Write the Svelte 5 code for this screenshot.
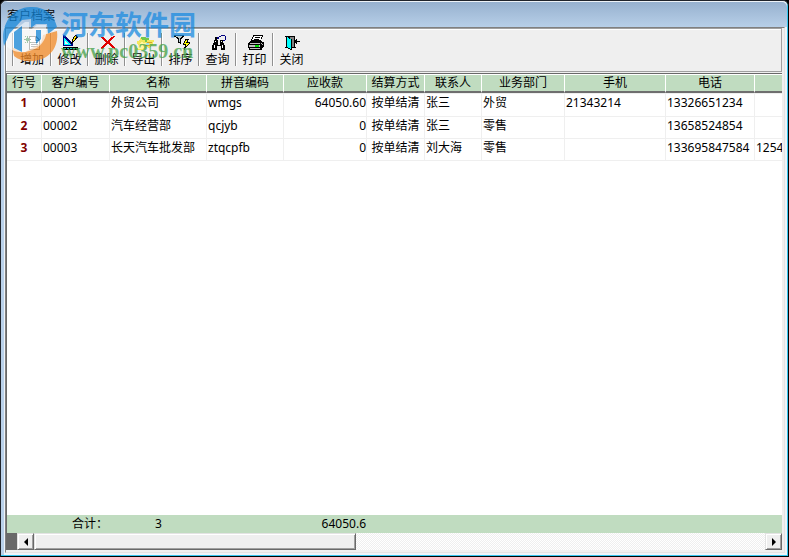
<script>
  const tools = [
    { id: 'add', label: '增加' },
    { id: 'edit', label: '修改' },
    { id: 'remove', label: '删除' },
    { id: 'export', label: '导出' },
    { id: 'sort', label: '排序' },
    { id: 'search', label: '查询' },
    { id: 'print', label: '打印' },
    { id: 'close', label: '关闭' }
  ]

  const columns = [
    { key: 'no', title: '行号', width: 35 },
    { key: 'code', title: '客户编号', width: 68 },
    { key: 'name', title: '名称', width: 97 },
    { key: 'pinyin', title: '拼音编码', width: 77 },
    { key: 'due', title: '应收款', width: 83 },
    { key: 'settle', title: '结算方式', width: 58 },
    { key: 'contact', title: '联系人', width: 57 },
    { key: 'dept', title: '业务部门', width: 83 },
    { key: 'mobile', title: '手机', width: 101 },
    { key: 'phone', title: '电话', width: 89 },
    { key: 'fax', title: '', width: 120 }
  ]
  const tableWidth = columns.reduce((sum, c) => sum + c.width, 0)

  const rows = [
    { no: 1, code: '00001', name: '外贸公司', pinyin: 'wmgs', due: '64050.60', settle: '按单结清', contact: '张三', dept: '外贸', mobile: '21343214', phone: '13326651234', fax: '' },
    { no: 2, code: '00002', name: '汽车经营部', pinyin: 'qcjyb', due: '0', settle: '按单结清', contact: '张三', dept: '零售', mobile: '', phone: '13658524854', fax: '' },
    { no: 3, code: '00003', name: '长天汽车批发部', pinyin: 'ztqcpfb', due: '0', settle: '按单结清', contact: '刘大海', dept: '零售', mobile: '', phone: '133695847584', fax: '1254' }
  ]
</script>

{#snippet icon(id)}
  <svg width="18" height="16" viewBox="0 0 18 16" shape-rendering="crispEdges" aria-hidden="true">
    {#if id === 'add'}
      <path d="M5 1h7l4 4v10H5z" fill="#707070" />
      <path d="M6 2h5v4h4v8H6zM12 3v2h2z" fill="#fff" />
      <path d="M7 7h7v1H7zM7 9h7v1H7zM7 11h7v1H7z" fill="#808080" />
      <path d="M3 1h1v2h1v1h2v1H5v1H4v2H3V6H2V5H0V4h2V3h1zM1 1h1v1H1zM6 1h1v1H6zM1 7h1v1H1zM6 7h1v1H6z" fill="#3b8a4a" />
    {:else if id === 'edit'}
      <path d="M1 0h1l9 9v2H1z" fill="#000080" />
      <path d="M2 3l7 7H2z" fill="#00ffff" />
      <path d="M3 6l3 3H3z" fill="#efefef" />
      <path d="M1 12h15v3H1z" fill="#000" />
      <path d="M2 13h13v1H2z" fill="#00c8c8" />
      <path d="M4 13h1v1H4zM7 13h1v1H7zM10 13h1v1h-1zM13 13h1v1h-1z" fill="#000" />
      <path d="M13 0h2l1 2-5 6-2 1 1-4z" fill="#000" />
      <path d="M13 1h1v2h-1v2h-1v1h-1V4h1V2h1z" fill="#ffe000" />
    {:else if id === 'remove'}
      <path d="M2 2h3v1h1v1h1v1h1v1h1V5h1V4h1V3h1V2h2V1h2v1h-1v1h-1v1h-1v1h-1v1h-1v2h1v1h1v1h1v1h1v1h1v2h-1v-1h-2v-1h-1v-1h-1v-1h-1V9H8v1H7v1H6v1H5v1H4v1H2v-2h1v-1h1v-1h1V9h1V8h1V7H6V6H5V5H4V4H3V3H2z" fill="#e00000" />
    {:else if id === 'export'}
      <path d="M1 6l3-1V3l3-1 2 1 2 2h7l-1 5-4 3-3-1-3 3H1l1-4z" fill="#f3e75c" />
      <path d="M2 11l3-4 4 1 3 3-3 1-3 2H2z" fill="#fff6a0" />
      <path d="M5 2h5v1h3v2h-2v2H9V5H6z" fill="#73c949" />
      <path d="M11 7h5v1h-5zM9 10h5v1H9z" fill="#d4a52c" />
      <path d="M10 8h3v2h-3z" fill="#9fe0ea" />
    {:else if id === 'sort'}
      <path d="M1 0h10v2h-1v1H9v1H8v5H7V8H5V4H4V3H3V2H1z" fill="#000" />
      <path d="M3 1h6v1H8v1H7v4H6V3H5V2H3z" fill="#b8ccd4" />
      <path d="M12 4h4v1h-1v2h2v2h-1v1h-1v1h-1v1h-1v1h-1v2h-1v-3h1v-2h-2V8h1V6h1z" fill="#000" />
      <path d="M13 5h1v2h-1v1h3v1h-1v1h-1v1h-1V9h-2V8h1V6h1z" fill="#ffff00" />
    {:else if id === 'search'}
      <path d="M5 2h2v3H5zM10 5h3v3h-3zM4 5h4v3H4zM3 8h5v2h2V8h4v2h1v5h-4v-4H7v4H2v-5h1z" fill="#000" />
      <path d="M4 10h1v3H4zM12 10h1v3h-1zM5 6h1v1H5zM11 6h1v1h-1z" fill="#fff" />
      <path d="M7 2h2V1h2V0h4v1h1v4h-1v1h-2V5h2V1h-4v1H9v2H7z" fill="#000080" />
    {:else if id === 'print'}
      <path d="M6 0h10v2h-1v2h-1v2h1v1h2v5h-1v1h-1v2H2v-2H1V8h1V7h1V6h1V4h1V2h1z" fill="#000" />
      <path d="M7 1h8v1h-1v3H5V4h1V2h1z" fill="#fff" />
      <path d="M8 2h5v1H8zM7 4h5v1H7z" fill="#000" />
      <path d="M3 8h10v1H3zM2 10h11v2H2zM3 13h10v1H3zM14 8h1v1h-1zM15 9h1v1h-1z" fill="#c0c0c0" />
      <path d="M8 10h4v2H8z" fill="#00e000" />
    {:else}
      <path d="M1 1h10v11h1v1H8v2H6v-1H4v-1H1v-1h1V2H1z" fill="#000" />
      <path d="M6 2h4v10H8V4H6z" fill="#808080" />
      <path d="M3 2h1v1h1v1h2v10H6v-1H4v-1H3z" fill="#00ffff" />
      <path d="M16 6v1h-3v2h-1V8h-1V5h1V4h1v2z" fill="#000" />
    {/if}
  </svg>
{/snippet}

<div class="window">
  <header class="titlebar">客户档案</header>

  <div class="watermark" aria-hidden="true">
    <svg width="58" height="60" viewBox="0 0 58 60">
      <path d="M3 43C-1 22 10 5 29 4c14-1 24 7 27 20l-9 7-1-10H35l-5 4v-9l-9 1L9 30z" fill="#1687d9" />
      <path d="M56 28c2 17-8 29-24 30-8 1-14-1-19-5l-2-9 9 5h4l16-9 2-8z" fill="#f28a26" />
      <path d="M8 31l16-12h4v29c-9 3-17 0-23-5z" fill="#fff" opacity="0.7" />
      <path d="M13 29l8-6v26l-8-4z" fill="#1687d9" />
      <path d="M28 28l8-6h9v10c-2 8-8 14-17 16z" fill="#fff" opacity="0.7" />
      <path d="M35 27h5v9l-5 5z" fill="#1687d9" />
    </svg>
    <div class="wm-text">
      <span class="wm-name">河东软件园</span>
      <span class="wm-url">www.pc0359.cn</span>
    </div>
  </div>

  <main class="client">
    <nav class="toolbar">
      {#each tools as tool (tool.id)}
        <button class="tool" type="button">
          {@render icon(tool.id)}
          <span>{tool.label}</span>
        </button>
      {/each}
    </nav>

    <section class="grid">
      <div class="grid-view">
        <table style="width: {tableWidth}px">
          <colgroup>
            {#each columns as col (col.key)}
              <col style="width: {col.width}px" />
            {/each}
          </colgroup>
          <thead>
            <tr>
              {#each columns as col (col.key)}
                <th scope="col">{col.title}</th>
              {/each}
            </tr>
          </thead>
          <tbody>
            {#each rows as row (row.no)}
              <tr>
                {#each columns as col (col.key)}
                  <td class={col.key}>{row[col.key]}</td>
                {/each}
              </tr>
            {/each}
          </tbody>
        </table>
      </div>

      <div class="totals">
        <span class="total-label">合计：</span>
        <span class="total-count">3</span>
        <span class="total-due">64050.6</span>
      </div>

      <div class="scrollbar">
        <span class="split"></span>
        <button class="arrow" type="button" aria-label="向左滚动">
          <svg width="4" height="8" viewBox="0 0 4 8"><path d="M4 0v8L0 4z" /></svg>
        </button>
        <div class="track"><div class="thumb"></div></div>
        <button class="arrow" type="button" aria-label="向右滚动">
          <svg width="4" height="8" viewBox="0 0 4 8"><path d="M0 0v8l4-4z" /></svg>
        </button>
      </div>
    </section>
  </main>
</div>

<style>
  :global(body) {
    background: #000;
  }
  .window {
    position: relative;
    box-sizing: border-box;
    display: flex;
    flex-direction: column;
    min-height: 100vh;
    padding: 0 3px 3px 4px;
    border: 1px solid #20242c;
    border-color: #20242c #000 #000 #20242c;
    border-radius: 6px 6px 0 0;
    background: #eef3f8;
    box-shadow: inset -1px -1px 0 #35c5ee, inset 3px 0 0 #b9d1ea;
    color: #000;
    font: 12px/16px "Noto Sans", "Noto Sans CJK SC", sans-serif;
  }
  .titlebar {
    height: 19px;
    padding: 6px 6px 0;
    margin: 1px -2px 0 -4px;
    background: linear-gradient(#97b1cf, #b7cfe8);
    border-radius: 5px 5px 0 0;
  }
  .client {
    flex: 1;
    display: flex;
    flex-direction: column;
    padding: 0 2px 2px 0;
    border: 1px solid #808080;
    border-right-color: #e3e3e3;
    border-bottom-color: #e3e3e3;
    background: #efefef;
  }

  /* toolbar */
  .toolbar {
    display: flex;
    height: 34px;
    padding: 4px 6px;
    border: 1px solid #a0a0a0;
    border-left: 0;
    box-shadow: inset 1px 1px 0 #fff;
  }
  .tool {
    display: flex;
    flex-direction: column;
    align-items: center;
    gap: 1px;
    width: 37px;
    height: 33px;
    padding: 2px 0 0 1px;
    border: 0;
    border-left: 1px solid #909090;
    box-shadow: inset 1px 0 0 #fff;
    background: none;
    font: inherit;
    line-height: 16px;
  }
  .tool:first-child {
    width: 38px;
  }
  .tool svg,
  .tool span {
    flex: none;
  }
  .tool svg {
    padding-left: 2px;
  }

  /* grid */
  .grid {
    flex: 1;
    display: flex;
    flex-direction: column;
    margin-top: 1px;
    border: 1px solid #696969;
    border-width: 1px 0 0 1px;
    background: #fff;
  }
  .grid-view {
    flex: 1;
    overflow: hidden;
  }
  table {
    table-layout: fixed;
    border-collapse: separate;
    border-spacing: 0;
  }
  th {
    height: 16px;
    padding: 0;
    border-top: 1px solid #fff;
    border-right: 1px solid #fff;
    border-bottom: 2px solid #6e6e6e;
    background: #c0dcc0;
    font-weight: 400;
    line-height: 16px;
  }
  tbody tr:first-child td {
    border-top: 1px solid #efefef;
    height: 22px;
  }
  td {
    height: 21px;
    padding: 0 1px;
    border-right: 1px solid #efefef;
    border-bottom: 1px solid #efefef;
    line-height: 18px;
    vertical-align: top;
    white-space: nowrap;
    overflow: hidden;
  }
  .no {
    color: #800000;
    font-weight: 700;
    text-align: center;
  }
  .due {
    padding-right: 0;
    text-align: right;
  }
  .settle {
    text-align: center;
  }
  .totals {
    display: flex;
    background: #c0dcc0;
    line-height: 18px;
  }
  .total-label {
    width: 103px;
    box-sizing: border-box;
    padding-left: 65px;
  }
  .total-count {
    width: 97px;
    text-align: center;
  }
  .total-due {
    width: 159px;
    text-align: right;
  }

  /* scrollbar */
  .scrollbar {
    display: flex;
    height: 17px;
  }
  .split {
    width: 10px;
    background: #696969;
  }
  .arrow,
  .thumb {
    box-sizing: border-box;
    border: 1px solid #e3e3e3;
    border-right-color: #696969;
    border-bottom-color: #696969;
    background: #efefef;
    box-shadow: inset 1px 1px 0 #fff, inset -1px -1px 0 #a0a0a0;
  }
  .arrow {
    display: flex;
    align-items: center;
    justify-content: center;
    width: 17px;
    padding: 0;
  }
  .track {
    flex: 1;
    background: repeating-conic-gradient(#fff 0 25%, #efefef 0 50%) 0 0 / 2px 2px;
  }
  .thumb {
    width: 44%;
    height: 100%;
  }

  /* overlay mark */
  .watermark {
    position: absolute;
    top: 2px;
    left: 0;
    display: flex;
    gap: 2px;
    opacity: 0.75;
    pointer-events: none;
  }
  .wm-text {
    display: flex;
    flex-direction: column;
    padding-top: 6px;
    white-space: nowrap;
  }
  .wm-name {
    color: #1c8be0;
    font: 700 27px/30px "Noto Sans CJK SC", sans-serif;
  }
  .wm-url {
    color: #43a047;
    font: 700 20px/24px "Liberation Serif", serif;
  }
</style>
